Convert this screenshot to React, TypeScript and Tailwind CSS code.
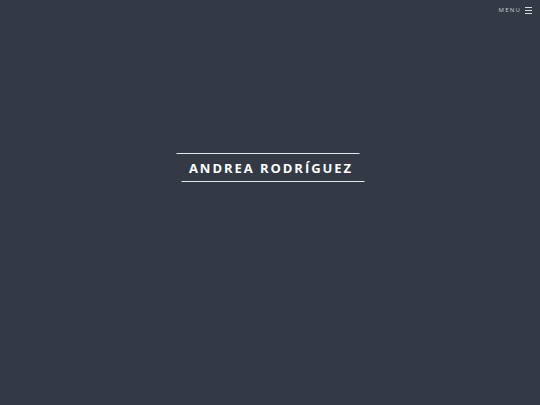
import React from 'react';

export default function App() {
  return (
    <div className="relative h-[405px] w-[540px] overflow-hidden bg-[#333a45] font-['Open_Sans',sans-serif] text-white">
      {/* Top menu */}
      <div className="absolute right-[8px] top-[6px] flex items-center gap-[4px]">
        <span className="text-[6px] uppercase tracking-[0.2em] text-[#c9ced6]">Menu</span>
        <div className="flex w-[7px] flex-col gap-[2px]">
          <span className="h-px w-full bg-[#d6dae0]" />
          <span className="h-px w-full bg-[#d6dae0]" />
          <span className="h-px w-full bg-[#d6dae0]" />
        </div>
      </div>

      <div className="flex h-full flex-col items-center pt-[153px]">
        <div className="flex w-[183px] flex-col items-center">
          <div className="h-px w-full -translate-x-[2.5px] bg-[#dfe8ee]" />
          <h1 className="pb-[5px] pl-[0.15em] pt-[6px] text-[13px] font-bold uppercase leading-[16px] tracking-[0.15em]">
            Andrea Rodríguez
          </h1>
          <div className="h-px w-full translate-x-[2.5px] bg-[#dfe8ee]" />
        </div>
      </div>
    </div>
  );
}
